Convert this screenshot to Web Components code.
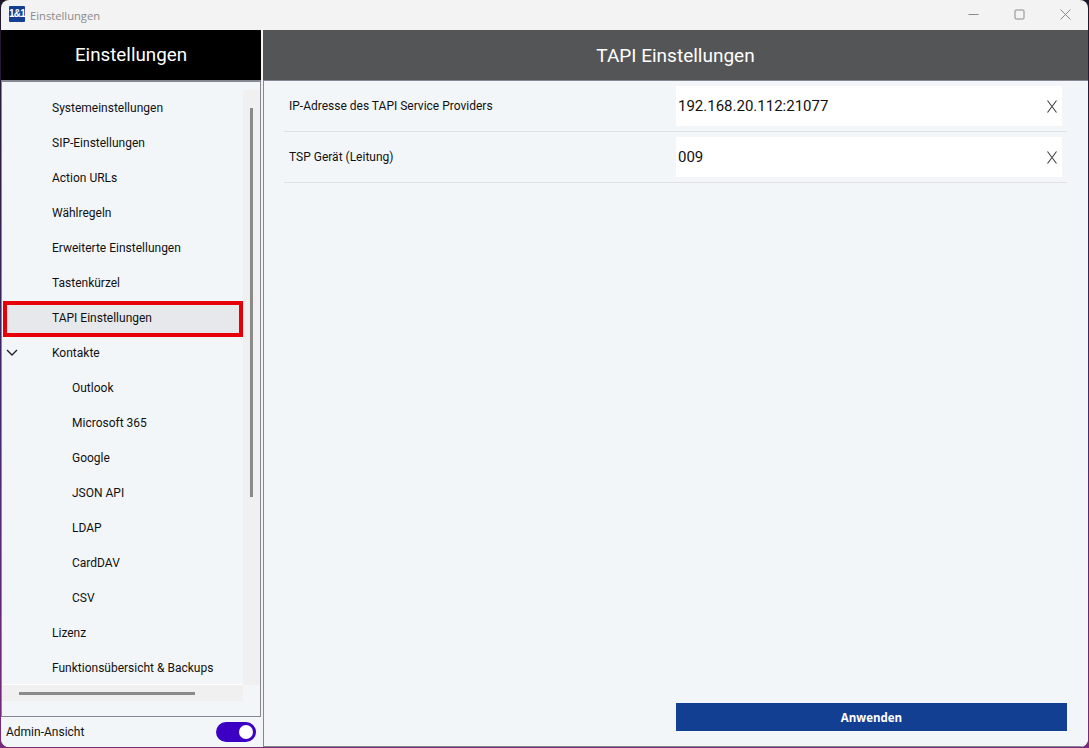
<!DOCTYPE html>
<html lang="de">
<head>
<meta charset="utf-8">
<title>Einstellungen</title>
<style>
    html, body { margin: 0; height: 100%; }
    body {
        width: 1089px;
        height: 748px;
        overflow: hidden;
        background: linear-gradient(180deg, #20162a 0%, #4a2a78 60%, #7a2a7a 100%);
        font-family: Roboto, sans-serif;
    }
</style>
</head>
<body>
<settings-window>
    <settings-nav slot="left">
        <nav-item>Systemeinstellungen</nav-item>
        <nav-item>SIP-Einstellungen</nav-item>
        <nav-item>Action URLs</nav-item>
        <nav-item>Wählregeln</nav-item>
        <nav-item>Erweiterte Einstellungen</nav-item>
        <nav-item>Tastenkürzel</nav-item>
        <nav-item selected>TAPI Einstellungen</nav-item>
        <nav-item expanded>Kontakte</nav-item>
        <nav-item sub>Outlook</nav-item>
        <nav-item sub>Microsoft 365</nav-item>
        <nav-item sub>Google</nav-item>
        <nav-item sub>JSON API</nav-item>
        <nav-item sub>LDAP</nav-item>
        <nav-item sub>CardDAV</nav-item>
        <nav-item sub>CSV</nav-item>
        <nav-item>Lizenz</nav-item>
        <nav-item>Funktionsübersicht &amp; Backups</nav-item>
    </settings-nav>
    <settings-page slot="right">
        <setting-row label="IP-Adresse des TAPI Service Providers" value="192.168.20.112:21077"></setting-row>
        <setting-row label="TSP Gerät (Leitung)" value="009"></setting-row>
    </settings-page>
</settings-window>

<script>
class SettingsWindow extends HTMLElement {
    connectedCallback() {
        this.attachShadow({ mode: 'open' });
        this.shadowRoot.innerHTML = `
            <style>
                :host {
                    display: flex;
                    flex-direction: column;
                    width: 1087px;
                    height: 747px;
                    margin-left: 1px;
                    background: #f3f3f3;
                    border-radius: 8px;
                    overflow: hidden;
                }
                .titlebar {
                    height: 30px;
                    flex: none;
                    display: flex;
                    align-items: center;
                    padding-left: 8px;
                    gap: 5px;
                    font-family: "Open Sans", sans-serif;
                    font-size: 11.2px;
                    color: #8a8a8a;
                }
                .logo {
                    width: 16px;
                    height: 16px;
                    margin-top: -2px;
                    background: #133f93;
                    color: #fff;
                    font: 700 10px/16px "Liberation Sans", sans-serif;
                    letter-spacing: -0.8px;
                    text-align: center;
                    border-radius: 1px;
                }
                .controls {
                    margin-left: auto;
                    display: flex;
                    align-items: center;
                    gap: 35px;
                    padding-right: 17px;
                    height: 100%;
                }
                .controls svg { display: block; margin-top: -2px; }
                .panes {
                    flex: 1;
                    display: flex;
                    gap: 2px;
                    min-height: 0;
                }
                ::slotted([slot="left"]) { width: 260px; flex: none; }
                ::slotted([slot="right"]) { flex: 1; min-width: 0; }
            </style>
            <div class="titlebar">
                <span class="logo">1&amp;1</span>
                <span>Einstellungen</span>
                <span class="controls">
                    <svg width="11" height="11" viewBox="0 0 11 11"><path d="M0.5 5.5h10" stroke="#8a8a8a" fill="none"/></svg>
                    <svg width="11" height="11" viewBox="0 0 11 11"><rect x="1" y="1" width="9" height="9" rx="1" stroke="#8a8a8a" fill="none"/></svg>
                    <svg width="11" height="11" viewBox="0 0 11 11"><path d="M0.5 0.5l10 10M10.5 0.5l-10 10" stroke="#8a8a8a" fill="none"/></svg>
                </span>
            </div>
            <div class="panes">
                <slot name="left"></slot>
                <slot name="right"></slot>
            </div>
        `;
    }
}
customElements.define('settings-window', SettingsWindow);

class SettingsNav extends HTMLElement {
    connectedCallback() {
        this.attachShadow({ mode: 'open' });
        this.shadowRoot.innerHTML = `
            <style>
                :host {
                    display: flex;
                    flex-direction: column;
                    background: #f2f6f9;
                    min-height: 0;
                }
                .head {
                    height: 50px;
                    flex: none;
                    display: flex;
                    align-items: center;
                    justify-content: center;
                    background: #000;
                    color: #fff;
                    font-size: 18.8px;
                }
                .box {
                    flex: 1;
                    min-height: 0;
                    border-top: 2px solid #858792;
                    border-right: 1px solid #858792;
                    border-bottom: 1px solid #858792;
                    border-left: 1px solid #858792;
                    padding: 8px 0 15px 0;
                    display: grid;
                    grid-template-columns: 241px 17px;
                    grid-template-rows: 1fr 16px;
                }
                .list {
                    overflow: hidden;
                    display: flex;
                    flex-direction: column;
                    min-height: 0;
                    border-bottom: 1px solid #fff;
                }
                .vtrack { background: #f0f0f0; display: flex; justify-content: center; }
                .vthumb { width: 3px; height: 389px; margin: 18px 0 0 -1px; background: #8a8a8a; }
                .htrack { background: #f0f0f0; grid-column: 1; display: flex; align-items: center; padding-left: 17px; }
                .hthumb { width: 176px; height: 3px; background: #8a8a8a; }
                .foot {
                    height: 30px;
                    flex: none;
                    display: flex;
                    align-items: center;
                    justify-content: space-between;
                    padding: 0 5px;
                    font-size: 12px;
                    color: #111;
                }
                .toggle {
                    width: 40px;
                    height: 20px;
                    border-radius: 10px;
                    background: #3b00c4;
                    display: flex;
                    align-items: center;
                    justify-content: flex-end;
                    padding-right: 3px;
                    box-sizing: border-box;
                }
                .knob { width: 14px; height: 14px; border-radius: 50%; background: #fff; }
            </style>
            <div class="head">Einstellungen</div>
            <div class="box">
                <div class="list"><slot></slot></div>
                <div class="vtrack"><div class="vthumb"></div></div>
                <div class="htrack"><div class="hthumb"></div></div>
            </div>
            <div class="foot">
                <span>Admin-Ansicht</span>
                <span class="toggle"><span class="knob"></span></span>
            </div>
        `;
    }
}
customElements.define('settings-nav', SettingsNav);

class NavItem extends HTMLElement {
    connectedCallback() {
        this.attachShadow({ mode: 'open' });
        this.shadowRoot.innerHTML = `
            <style>
                :host {
                    display: block;
                    height: 35px;
                    flex: none;
                    font-size: 12px;
                    color: #111;
                }
                .row {
                    position: relative;
                    display: flex;
                    align-items: center;
                    height: 100%;
                    box-sizing: border-box;
                    padding-left: 50px;
                    white-space: nowrap;
                }
                :host([sub]) .row { padding-left: 70px; }
                :host([selected]) .row {
                    margin: 1px 0 -1px 1px;
                    width: 240px;
                    height: 36px;
                    border: 4px solid #e60008;
                    background: #e6e8eb;
                    padding: 0 0 2px 45px;
                }
                .chev { position: absolute; left: 4px; top: 14px; }
            </style>
            <div class="row">
                ${this.hasAttribute('expanded') ? '<svg class="chev" width="12" height="7" viewBox="0 0 12 7"><path d="M1 1l5 5 5-5" stroke="#222" stroke-width="1.4" fill="none"/></svg>' : ''}
                <slot></slot>
            </div>
        `;
    }
}
customElements.define('nav-item', NavItem);

class SettingsPage extends HTMLElement {
    connectedCallback() {
        this.attachShadow({ mode: 'open' });
        this.shadowRoot.innerHTML = `
            <style>
                :host {
                    display: flex;
                    flex-direction: column;
                    background: #f2f6f9;
                    min-height: 0;
                }
                .head {
                    height: 50px;
                    flex: none;
                    display: flex;
                    align-items: center;
                    justify-content: center;
                    background: #545557;
                    color: #fff;
                    font-size: 19px;
                }
                .body {
                    flex: 1;
                    display: flex;
                    flex-direction: column;
                    border-top: 1px solid #858792;
                    border-left: 1px solid #858792;
                    border-bottom: 1px solid #858792;
                    padding: 0 21px 15px 20px;
                }
                .apply {
                    margin-top: auto;
                    margin-left: 392px;
                    height: 28px;
                    display: flex;
                    align-items: center;
                    justify-content: center;
                    background: #133f93;
                    color: #fff;
                    font: 700 11.5px "Open Sans", sans-serif;
                }
            </style>
            <div class="head">TAPI Einstellungen</div>
            <div class="body">
                <slot></slot>
                <div class="apply">Anwenden</div>
            </div>
        `;
    }
}
customElements.define('settings-page', SettingsPage);

class SettingRow extends HTMLElement {
    connectedCallback() {
        this.attachShadow({ mode: 'open' });
        this.shadowRoot.innerHTML = `
            <style>
                :host {
                    display: flex;
                    align-items: center;
                    height: 50px;
                    flex: none;
                    border-bottom: 1px solid #dfe1e4;
                    padding-left: 5px;
                    font-size: 12px;
                    color: #111;
                }
                .label { width: 387px; flex: none; }
                .field {
                    width: 386px;
                    height: 40px;
                    display: flex;
                    align-items: center;
                    justify-content: space-between;
                    box-sizing: border-box;
                    padding: 0 5px 0 2px;
                    background: #fff;
                    font-size: 15px;
                }
                .field svg { display: block; }
            </style>
            <span class="label">${this.getAttribute('label')}</span>
            <span class="field">
                <span>${this.getAttribute('value')}</span>
                <svg width="10" height="13" viewBox="0 0 10 13"><path d="M0.5 0.5l9 12M9.5 0.5l-9 12" stroke="#444" stroke-width="1.1" fill="none"/></svg>
            </span>
        `;
    }
}
customElements.define('setting-row', SettingRow);
</script>
</body>
</html>
